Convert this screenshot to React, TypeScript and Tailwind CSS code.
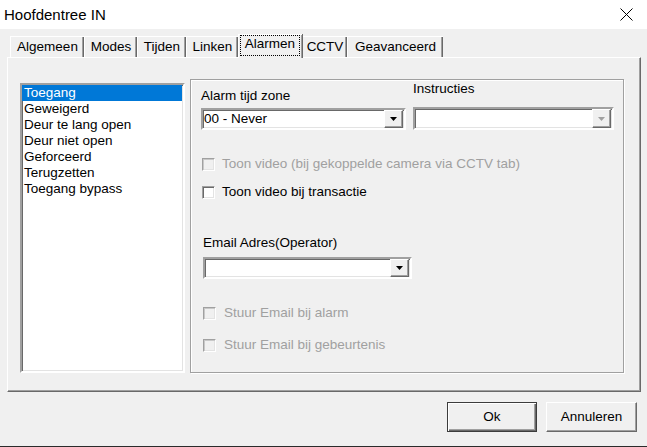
import React from 'react';

const tabs = [
  { label: 'Algemeen', w: 'w-[74px]' },
  { label: 'Modes', w: 'w-[53px]' },
  { label: 'Tijden', w: 'w-[49px]' },
  { label: 'Linken', w: 'w-[52px]' },
  { label: 'Alarmen', w: 'w-[64px]', active: true },
  { label: 'CCTV', w: 'w-[45px]' },
  { label: 'Geavanceerd', w: 'w-[96px]' },
];

const events = [
  'Toegang',
  'Geweigerd',
  'Deur te lang open',
  'Deur niet open',
  'Geforceerd',
  'Terugzetten',
  'Toegang bypass',
];

function Arrow({ disabled }: { disabled?: boolean }) {
  return (
    <svg width="7" height="4" viewBox="0 0 7 4">
      <path d="M0 0h7L3.5 4z" fill={disabled ? '#a0a0a0' : '#000'} />
    </svg>
  );
}

function Combo({ className, value, disabled }: { className: string; value?: string; disabled?: boolean }) {
  return (
    <div
      className={`${className} flex bg-white border-2 border-t-[#a0a0a0] border-l-[#a0a0a0] border-r-white border-b-white shadow-[inset_1px_1px_0_#696969,inset_-1px_-1px_0_#e3e3e3]`}
    >
      <div className="flex-1 pl-[1px] flex items-center text-[13.5px] leading-none">{value}</div>
      <div className="w-[19px] mr-[1px] bg-[#f0f0f0] flex items-center justify-center border border-t-white border-l-white border-r-[#696969] border-b-[#696969] shadow-[inset_-1px_-1px_0_#a0a0a0]">
        <Arrow disabled={disabled} />
      </div>
    </div>
  );
}

function Check({ label, disabled, className, gap }: { label: string; disabled?: boolean; className: string; gap: string }) {
  return (
    <div className={`${className} flex items-center h-[16px] ${gap}`}>
      <div
        className={`w-[13px] h-[13px] border border-t-[#a0a0a0] border-l-[#a0a0a0] border-r-white border-b-white ${
          disabled
            ? 'bg-[#f0f0f0] shadow-[inset_1px_1px_0_#c8c8c8,inset_-1px_-1px_0_#e3e3e3]'
            : 'bg-white shadow-[inset_1px_1px_0_#696969,inset_-1px_-1px_0_#e3e3e3]'
        }`}
      />
      <span className={`text-[13.5px] leading-[16px] ${disabled ? 'text-[#a0a0a0]' : 'text-black'}`}>{label}</span>
    </div>
  );
}

export default function App() {
  return (
    <div className="w-[647px] h-[447px] box-border bg-[#f0f0f0] border-b border-[#2b2b2b] flex flex-col overflow-hidden font-['Liberation_Sans',Arial,sans-serif] text-black">
      {/* title bar */}
      <div className="h-[29px] bg-white flex items-center justify-between pl-[4px] pr-[14px]">
        <span className="text-[15px] leading-none">Hoofdentree IN</span>
        <svg width="13" height="13" viewBox="0 0 13 13">
          <path d="M0.5 0.5L12.5 12.5M12.5 0.5L0.5 12.5" stroke="#000" strokeWidth="1" />
        </svg>
      </div>

      {/* tabs */}
      <div className="mt-[5px] ml-[7px] pl-[3px] h-[23px] flex items-end">
        {tabs.map((t) =>
          t.active ? (
            <div
              key={t.label}
              className={`${t.w} h-[24px] -mb-[1px] relative z-10 bg-[#f0f0f0] flex pl-[1px] pr-[2px] pb-[2px] border-l border-t border-white shadow-[1px_0_0_#696969,inset_-1px_0_0_#a0a0a0]`}
            >
              <span className="flex-1 border border-dotted border-black flex items-center justify-center text-[13.5px] leading-none pb-[3px]">
                {t.label}
              </span>
            </div>
          ) : (
            <div
              key={t.label}
              className={`${t.w} h-[21px] flex items-center justify-center text-[13.5px] leading-none border-l border-t border-white shadow-[inset_-1px_0_0_#696969,inset_-2px_0_0_#a0a0a0]`}
            >
              {t.label}
            </div>
          )
        )}
      </div>

      {/* tab panel */}
      <div className="ml-[7px] w-[634px] h-[335px] border border-t-white border-l-white border-r-[#696969] border-b-[#696969] shadow-[inset_-1px_-1px_0_#a0a0a0] flex pl-[12px] pt-[21px]">
        <div className="w-[165px] h-[290px] mt-[4px] bg-white border-2 border-t-[#a0a0a0] border-l-[#a0a0a0] border-r-white border-b-white shadow-[inset_1px_1px_0_#696969,inset_-1px_-1px_0_#e3e3e3]">
          {events.map((e, i) => (
            <div
              key={e}
              className={`h-[16px] mr-[1px] pl-[2px] text-[13.5px] leading-[16px] ${i === 0 ? 'bg-[#0078d7] text-white' : ''}`}
            >
              {e}
            </div>
          ))}
        </div>

        <div className="ml-[5px] w-[434px] h-[294px] border border-[#a0a0a0] shadow-[inset_1px_1px_0_#fff,1px_1px_0_#fff] pl-[10px] flex flex-col">
          <div className="flex">
            <div className="w-[205px] pt-[8px]">
              <div className="h-[16px] text-[13.5px] leading-[16px]">Alarm tijd zone</div>
              <Combo className="mt-[4px] w-[205px] h-[22px]" value="00 - Never" />
            </div>
            <div className="ml-[7px] pt-[1px]">
              <div className="h-[16px] text-[13.5px] leading-[16px]">Instructies</div>
              <Combo className="mt-[10px] w-[201px] h-[23px]" disabled />
            </div>
          </div>

          <Check className="mt-[26px] ml-[1px]" gap="gap-[7px]" disabled label="Toon video (bij gekoppelde camera via CCTV tab)" />
          <Check className="mt-[12px] ml-[1px]" gap="gap-[7px]" label="Toon video bij transactie" />

          <div className="mt-[35px] ml-[2px] h-[16px] text-[13.5px] leading-[16px]">Email Adres(Operator)</div>
          <Combo className="mt-[6px] ml-[2px] w-[209px] h-[22px]" />

          <Check className="mt-[26px] ml-[2px]" gap="gap-[8px]" disabled label="Stuur Email bij alarm" />
          <Check className="mt-[16px] ml-[2px]" gap="gap-[8px]" disabled label="Stuur Email bij gebeurtenis" />
        </div>
      </div>

      {/* buttons */}
      <div className="mt-[10px] flex justify-end gap-[9px] pr-[10px]">
        <button className="w-[90px] h-[30px] border border-[#3c3c3c] bg-[#f0f0f0] text-[13.5px] shadow-[inset_1px_1px_0_#fff,inset_-1px_-1px_0_#696969,inset_-2px_-2px_0_#a0a0a0]">
          Ok
        </button>
        <button className="w-[91px] h-[30px] border border-t-white border-l-white border-r-[#696969] border-b-[#696969] bg-[#f0f0f0] text-[13.5px] shadow-[inset_-1px_-1px_0_#a0a0a0]">
          Annuleren
        </button>
      </div>
    </div>
  );
}
